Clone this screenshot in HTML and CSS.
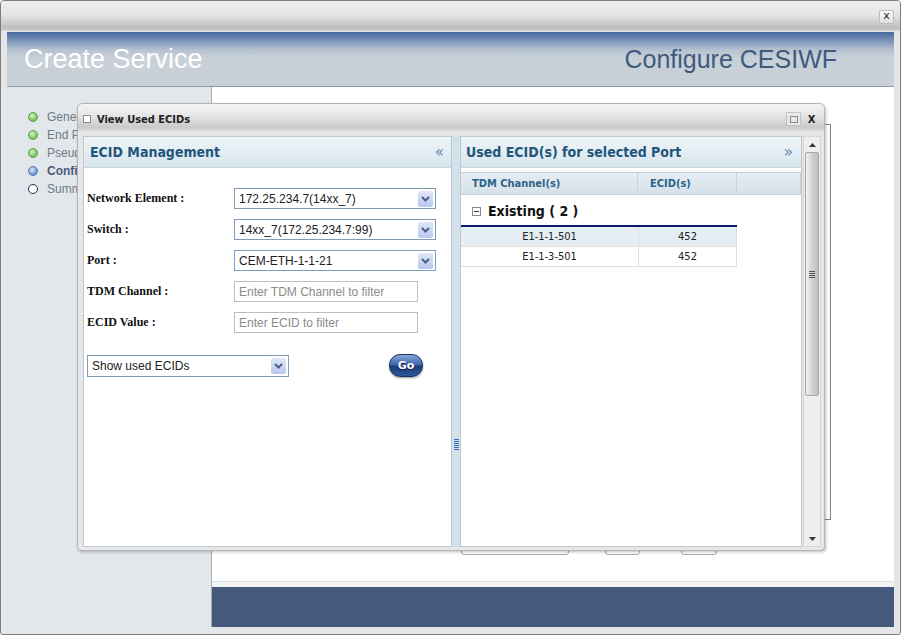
FILE: index.html
```html
<!DOCTYPE html>
<html>
<head>
  <meta charset="utf-8">
  <title>Create Service</title>
  <link rel="stylesheet" href="styles.css">
</head>
<body>
  <div class="window">
    <div class="titlebar"><span class="win-close">x</span></div>

    <div class="frame">
      <div class="banner">
        <span class="banner-title">Create Service</span>
        <span class="banner-step">Configure CESIWF</span>
      </div>

      <div class="layout">
        <ul class="steps">
          <li class="step done">General</li>
          <li class="step done">End Points</li>
          <li class="step done">Pseudowire</li>
          <li class="step current">Configure CESIWF</li>
          <li class="step todo">Summary</li>
        </ul>

        <div class="main">
          <div class="content">
            <div class="box"></div>
            <div class="actions">
              <span class="btn btn-wide"></span>
              <span class="btn btn-mid"></span>
              <span class="btn btn-last"></span>
            </div>
          </div>
          <div class="footer"></div>
        </div>
      </div>
    </div>

    <!-- popup -->
    <div class="dialog">
      <div class="dialog-bar">
        <i class="dialog-icon"></i>
        <span class="dialog-title">View Used ECIDs</span>
        <span class="dialog-btn restore"><i></i></span>
        <span class="dialog-btn close">X</span>
      </div>

      <div class="dialog-body">
        <div class="pane pane-left">
          <div class="pane-head"><span>ECID Management</span><span class="collapse">&laquo;</span></div>

          <div class="form">
            <label>Network Element :</label>
            <div class="select"><span>172.25.234.7(14xx_7)</span><svg class="arrow" width="15" height="16"><path d="M4 6l3.5 3.5L11 6" stroke="#4b5f86" stroke-width="2" fill="none"/></svg></div>

            <label>Switch :</label>
            <div class="select"><span>14xx_7(172.25.234.7:99)</span><svg class="arrow" width="15" height="16"><path d="M4 6l3.5 3.5L11 6" stroke="#4b5f86" stroke-width="2" fill="none"/></svg></div>

            <label>Port :</label>
            <div class="select"><span>CEM-ETH-1-1-21</span><svg class="arrow" width="15" height="16"><path d="M4 6l3.5 3.5L11 6" stroke="#4b5f86" stroke-width="2" fill="none"/></svg></div>

            <label>TDM Channel :</label>
            <input type="text" class="field" placeholder="Enter TDM Channel to filter">

            <label>ECID Value :</label>
            <input type="text" class="field" placeholder="Enter ECID to filter">
          </div>

          <div class="form-foot">
            <div class="select select-mode"><span>Show used ECIDs</span><svg class="arrow" width="15" height="16"><path d="M4 6l3.5 3.5L11 6" stroke="#4b5f86" stroke-width="2" fill="none"/></svg></div>
            <button class="go">Go</button>
          </div>
        </div>

        <div class="splitter"><i class="grip"></i></div>

        <div class="pane pane-right">
          <div class="pane-head"><span>Used ECID(s) for selected Port</span><span class="collapse">&raquo;</span></div>

          <div class="grid">
            <div class="grid-head">
              <span class="c1">TDM Channel(s)</span>
              <span class="c2">ECID(s)</span>
              <span class="c3"></span>
            </div>
            <div class="group"><i class="toggle"></i>Existing ( 2 )</div>
            <div class="row alt"><span class="c1">E1-1-1-501</span><span class="c2">452</span></div>
            <div class="row"><span class="c1">E1-1-3-501</span><span class="c2">452</span></div>
          </div>
        </div>

        <div class="vscroll">
          <span class="sb-arrow"><svg width="7" height="4"><path d="M0 4L3.5 0L7 4z" fill="#333"/></svg></span>
          <span class="sb-thumb"><i class="sb-grip"></i></span>
          <span class="sb-track"></span>
          <span class="sb-arrow"><svg width="7" height="4"><path d="M0 0L3.5 4L7 0z" fill="#333"/></svg></span>
        </div>
      </div>
    </div>
  </div>
</body>
</html>
```

FILE: styles.css
```css
body {
  margin: 0;
  font-family: "Liberation Sans", Arial, sans-serif;
  background: #fff;
}

.window {
  position: relative;
  width: 901px;
  height: 635px;
  box-sizing: border-box;
  border: 1px solid #7d7d7d;
  border-radius: 4px 4px 3px 3px;
  background: #e4e6e9;
  overflow: hidden;
}

.titlebar {
  height: 30px;
  display: flex;
  justify-content: flex-end;
  align-items: center;
  padding-right: 6px;
  background: linear-gradient(#efefef 0%, #e5e5e5 45%, #c8c8c8 78%, #bdbdbd 90%, #d4d4d4 100%);
}

.win-close {
  width: 13px;
  height: 12px;
  margin-top: 2px;
  border: 1px solid #bcbcbc;
  border-radius: 2px;
  background: linear-gradient(#fafafa, #e0e0e0);
  font: 11px/10px "DejaVu Sans", sans-serif;
  text-align: center;
  color: #222;
}

.frame {
  padding: 1px 6px 0;
}

.banner {
  height: 54px;
  border-bottom: 1px solid #8e9aa6;
  display: flex;
  align-items: center;
  justify-content: space-between;
  padding: 0 57px 0 17px;
  background: linear-gradient(#46699f 0px, #7891b6 8px, #b6c2cf 18px, #c8d0d8 26px, #c9d0d7 100%);
}

.banner-title {
  color: #fff;
  font-size: 27px;
}

.banner-step {
  color: #3e5a7f;
  font-size: 25px;
}

.layout {
  display: flex;
  height: 540px;
}

.steps {
  width: 205px;
  box-sizing: border-box;
  margin: 0;
  padding: 21px 0 0 21px;
  list-style: none;
  background: #e2e7ec;
  border-right: 1px solid #a5adb5;
}

/* the popup covers the rest of each label */
.step {
  display: flex;
  align-items: center;
  width: 49px;
  height: 18px;
  overflow: hidden;
  font-size: 12px;
  color: #6f7a85;
  white-space: nowrap;
}

.step::before {
  content: "";
  flex: none;
  width: 8px;
  height: 8px;
  margin-right: 9px;
  border-radius: 50%;
  border: 1px solid;
}

.done::before {
  background: radial-gradient(circle at 40% 35%, #d8f4c4, #6cbb52 75%);
  border-color: #5d9e4a;
}

.current {
  font-weight: bold;
  color: #4b5c7c;
}

.current::before {
  background: radial-gradient(circle at 40% 35%, #dce9fb, #5d8ad0 75%);
  border-color: #5679b4;
}

.todo::before {
  background: #fff;
  border-color: #1e2f5a;
}

.main {
  flex: 1;
  display: flex;
  flex-direction: column;
  background: #f1f3f5;
}

.content {
  flex: 1;
  background: #fff;
  padding: 37px 63px 0 0;
  border-bottom: 1px solid #d9dfe4;
}

.box {
  height: 396px;
  margin-left: 10px;
  box-sizing: border-box;
  border: 1px solid #808080;
}

.actions {
  display: flex;
  margin-top: 14px;
  padding-left: 249px;
}

.btn {
  height: 21px;
  box-sizing: border-box;
  border: 1px solid #a9a9a9;
  border-radius: 3px;
  background: #fff;
}

.btn-wide { width: 108px; }
.btn-mid { width: 35px; margin-left: 36px; }
.btn-last { width: 36px; margin-left: 41px; }

.footer {
  height: 40px;
  margin-top: 5px;
  background: #44597b;
}

/* dialog */

.dialog {
  position: absolute;
  left: 76px;
  top: 102px;
  width: 748px;
  height: 448px;
  box-sizing: border-box;
  border: 1px solid #b5b5b5;
  border-radius: 6px 6px 4px 4px;
  background: #e7e7e7;
  box-shadow: 1px 1px 3px rgba(0, 0, 0, .25);
  display: flex;
  flex-direction: column;
}

.dialog-bar {
  height: 27px;
  flex: none;
  display: flex;
  align-items: center;
  padding: 3px 6px 0 5px;
  box-sizing: border-box;
  border-radius: 5px 5px 0 0;
  background: linear-gradient(#f4f4f4, #e7e7e7 40%, #cacaca 85%, #dadada);
}

.dialog-icon {
  width: 6px;
  height: 6px;
  border: 1px solid #8a8a8a;
  background: #fff;
}

.dialog-title {
  margin-left: 6px;
  font: bold 11px "DejaVu Sans Condensed", "DejaVu Sans", sans-serif;
  color: #222;
}

.dialog-btn {
  width: 13px;
  height: 12px;
  display: flex;
  align-items: center;
  justify-content: center;
}

.restore {
  margin-left: auto;
  border: 1px solid #c4c4c4;
  background: #e8e8e8;
}

.restore i {
  width: 6px;
  height: 5px;
  border: 1px solid #8a8a8a;
}

.close {
  margin-left: 4px;
  font: bold 10px "DejaVu Sans", sans-serif;
  color: #222;
}

.dialog-body {
  flex: 1;
  display: flex;
  padding: 5px 3px 3px 5px;
}

.pane {
  display: flex;
  flex-direction: column;
  box-sizing: border-box;
  border: 1px solid #bac9d4;
  background: #fff;
}

.pane-left { width: 369px; }
.pane-right { width: 342px; }

.pane-head {
  height: 30px;
  flex: none;
  display: flex;
  align-items: center;
  justify-content: space-between;
  padding: 0 7px 0 6px;
  border-bottom: 1px solid #c5d4de;
  background: linear-gradient(#eef4f8, #d8e5ed);
  font: bold 14px "DejaVu Sans Condensed", "DejaVu Sans", sans-serif;
  color: #21557a;
}

.pane-right .pane-head {
  padding: 0 8px 0 5px;
}

.collapse {
  font: 15px "DejaVu Sans", sans-serif;
  color: #5a85ad;
}

.form {
  display: grid;
  grid-template-columns: 147px auto;
  row-gap: 10px;
  align-items: center;
  padding: 20px 0 0 3px;
}

.form label {
  font: bold 12px "Liberation Serif", "Times New Roman", serif;
  color: #111;
}

.select {
  width: 202px;
  height: 21px;
  box-sizing: border-box;
  display: flex;
  align-items: center;
  justify-content: space-between;
  padding: 0 2px 0 4px;
  border: 1px solid #7f9db9;
  background: #fff;
  font-size: 12px;
  color: #222;
}

.arrow {
  background: linear-gradient(#e0e7f8, #b8c7ee);
  border-radius: 2px;
}

.field {
  width: 184px;
  height: 21px;
  box-sizing: border-box;
  margin: 0;
  padding: 0 4px;
  border: 1px solid #b9bfc6;
  font: 12px "Liberation Sans", Arial, sans-serif;
}

.field::placeholder {
  color: #8a8a8a;
}

.form-foot {
  display: flex;
  align-items: center;
  margin-top: 21px;
  padding-left: 3px;
}

.select-mode {
  height: 22px;
}

.go {
  width: 34px;
  height: 23px;
  margin-left: 100px;
  padding: 0;
  border: 1px solid #1b3363;
  border-radius: 11px;
  background: linear-gradient(#86a7d8 0%, #4068aa 45%, #1d3f7c 55%, #2c5698 100%);
  box-shadow: 0 1px 2px rgba(0, 0, 0, .4);
  color: #fff;
  font: bold 11px "DejaVu Sans", sans-serif;
  text-shadow: 0 1px 1px #0b1a3a;
}

.splitter {
  width: 8px;
  box-sizing: border-box;
  display: flex;
  justify-content: center;
  padding-top: 303px;
  background: #d3e1ea;
}

.grip {
  width: 5px;
  height: 12px;
  background: repeating-linear-gradient(#2f6db5 0 1px, #d3e1ea 1px 2px);
}

.grid {
  margin-top: 4px;
}

.grid-head {
  display: flex;
  height: 23px;
  box-sizing: border-box;
  border-top: 1px solid #c6d3dc;
  border-bottom: 1px solid #c6d3dc;
  background: linear-gradient(#e6edf3, #d6e1e9);
  font: bold 11px "DejaVu Sans Condensed", "DejaVu Sans", sans-serif;
  color: #2c6388;
}

.grid-head span {
  display: flex;
  align-items: center;
  box-sizing: border-box;
  border-right: 1px solid #c6d3dc;
}

.grid-head .c1 { width: 177px; padding-left: 11px; }
.grid-head .c2 { width: 99px; padding-left: 12px; }
.grid-head .c3 { width: 64px; }

.group {
  width: 276px;
  height: 32px;
  display: flex;
  align-items: center;
  padding: 2px 0 0 11px;
  box-sizing: border-box;
  border-bottom: 2px solid #0b1a6e;
  font: bold 14px "DejaVu Sans Condensed", "DejaVu Sans", sans-serif;
  color: #111;
}

.toggle {
  position: relative;
  width: 7px;
  height: 7px;
  margin-right: 7px;
  border: 1px solid #8a8a8a;
}

.toggle::after {
  content: "";
  position: absolute;
  left: 1px;
  top: 3px;
  width: 5px;
  height: 1px;
  background: #333;
}

.row {
  display: flex;
  width: 276px;
  height: 20px;
  box-sizing: border-box;
  border-bottom: 1px solid #dedede;
  border-right: 1px solid #dedede;
  font: 11px "DejaVu Sans Condensed", "DejaVu Sans", sans-serif;
  color: #222;
}

.row span {
  display: flex;
  align-items: center;
  justify-content: center;
}

.row .c1 { width: 177px; border-right: 1px solid #dedede; }
.row .c2 { flex: 1; }

.alt {
  background: #e6eef5;
}

.vscroll {
  width: 18px;
  margin-left: 1px;
  box-sizing: border-box;
  display: flex;
  flex-direction: column;
  align-items: center;
  border: 1px solid #d6d6d6;
  background: #eeeeee;
}

.sb-arrow {
  height: 15px;
  display: flex;
  align-items: center;
}

.sb-thumb {
  width: 14px;
  height: 244px;
  box-sizing: border-box;
  display: flex;
  align-items: center;
  justify-content: center;
  border: 1px solid #a6a6a6;
  border-radius: 2px;
  background: linear-gradient(90deg, #f2f2f2, #d2d2d2 50%, #bebebe);
}

.sb-grip {
  width: 6px;
  height: 7px;
  background: repeating-linear-gradient(#555 0 1px, transparent 1px 2px);
}

.sb-track {
  flex: 1;
}
```
